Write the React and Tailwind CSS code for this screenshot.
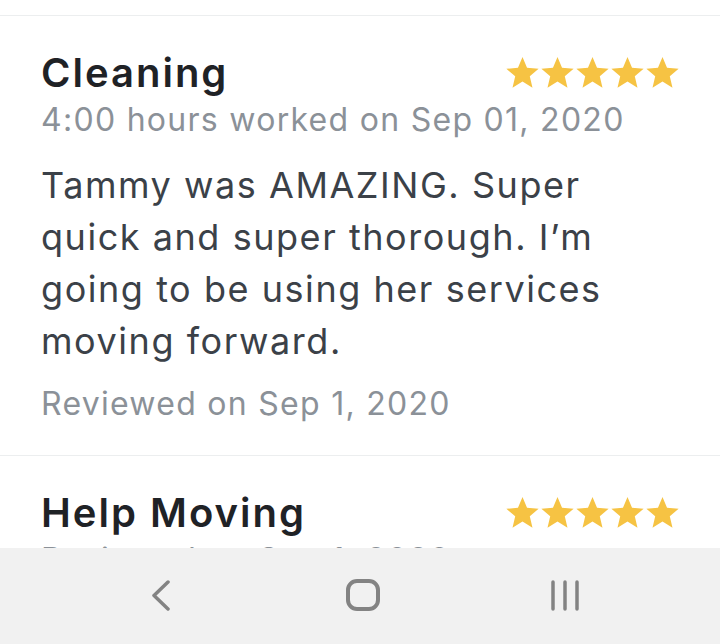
import React from 'react'

const Star = () => (
    <svg width="35" height="34" viewBox="0 0 24 23" className="block">
        <path d="M12 0.6l3.1 7.35 7.95.65-6.05 5.2 1.85 7.75L12 17.4 5.15 21.55 7 13.8.95 8.6l7.95-.65z" fill="#f6c343" />
    </svg>
)

const Stars = () => (
    <div className="flex -mr-[1px]">
        {[0, 1, 2, 3, 4].map((i) => <Star key={i} />)}
    </div>
)

const ReviewCard = ({ title, worked, lines, reviewed }) => {
    return (
        <div className="border-t border-[#eceeef] px-[41px] pt-[34px] pb-[31px]">
            {/* Header */}
            <div className="flex items-center justify-between">
                <h2 className="text-[40px] leading-[46px] font-semibold tracking-[0.05em] text-[#1f2226]">{title}</h2>
                <Stars />
            </div>
            {worked && <p className="text-[32px] leading-[48px] tracking-[0.04em] text-[#8b9198]">{worked}</p>}
            {lines && (
                <p className="mt-[15px] text-[36px] leading-[52px] tracking-[0.043em] text-[#3b4148]">
                    {lines.map((l, i) => (
                        <span key={i} className="block whitespace-nowrap">{l}</span>
                    ))}
                </p>
            )}
            <p className={`${lines ? 'mt-[17px]' : 'mt-[4px]'} text-[32px] leading-[40px] tracking-[0.04em] text-[#8b9198]`}>{reviewed}</p>
        </div>
    )
}

const NavBar = () => (
    <div className="h-[96px] shrink-0 bg-[#f1f1f1] flex items-center">
        <div className="ml-[60px] flex items-center -mt-[2px]">
            {/* Back */}
            <div className="w-[202px] flex justify-center">
                <svg width="24" height="32" viewBox="0 0 24 32">
                    <polyline points="19,3 5,16.5 19,30" fill="none" stroke="#838383" strokeWidth="3.5" strokeLinecap="round" strokeLinejoin="round" />
                </svg>
            </div>
            {/* Home */}
            <div className="w-[202px] flex justify-center">
                <svg width="34" height="32" viewBox="0 0 34 32">
                    <rect x="2" y="2" width="30" height="28" rx="9" fill="none" stroke="#838383" strokeWidth="4" />
                </svg>
            </div>
            {/* Recents */}
            <div className="w-[202px] flex justify-center">
                <svg width="30" height="32" viewBox="0 0 30 32">
                    <line x1="3" y1="3" x2="3" y2="30" stroke="#838383" strokeWidth="3.5" strokeLinecap="round" />
                    <line x1="15" y1="3" x2="15" y2="30" stroke="#838383" strokeWidth="3.5" strokeLinecap="round" />
                    <line x1="27" y1="3" x2="27" y2="30" stroke="#838383" strokeWidth="3.5" strokeLinecap="round" />
                </svg>
            </div>
        </div>
    </div>
)

export default function App() {
    return (
        <div className="h-[644px] w-[720px] flex flex-col bg-white font-['Inter',sans-serif]">
            <div className="flex-1 min-h-0 overflow-hidden pt-[15px]">
                <ReviewCard
                    title="Cleaning"
                    worked="4:00 hours worked on Sep 01, 2020"
                    lines={[
                        'Tammy was AMAZING. Super',
                        'quick and super thorough. I’m',
                        'going to be using her services',
                        'moving forward.',
                    ]}
                    reviewed="Reviewed on Sep 1, 2020"
                />
                <ReviewCard title="Help Moving" reviewed="Reviewed on Sep 1, 2020" />
            </div>
            <NavBar />
        </div>
    )
}
